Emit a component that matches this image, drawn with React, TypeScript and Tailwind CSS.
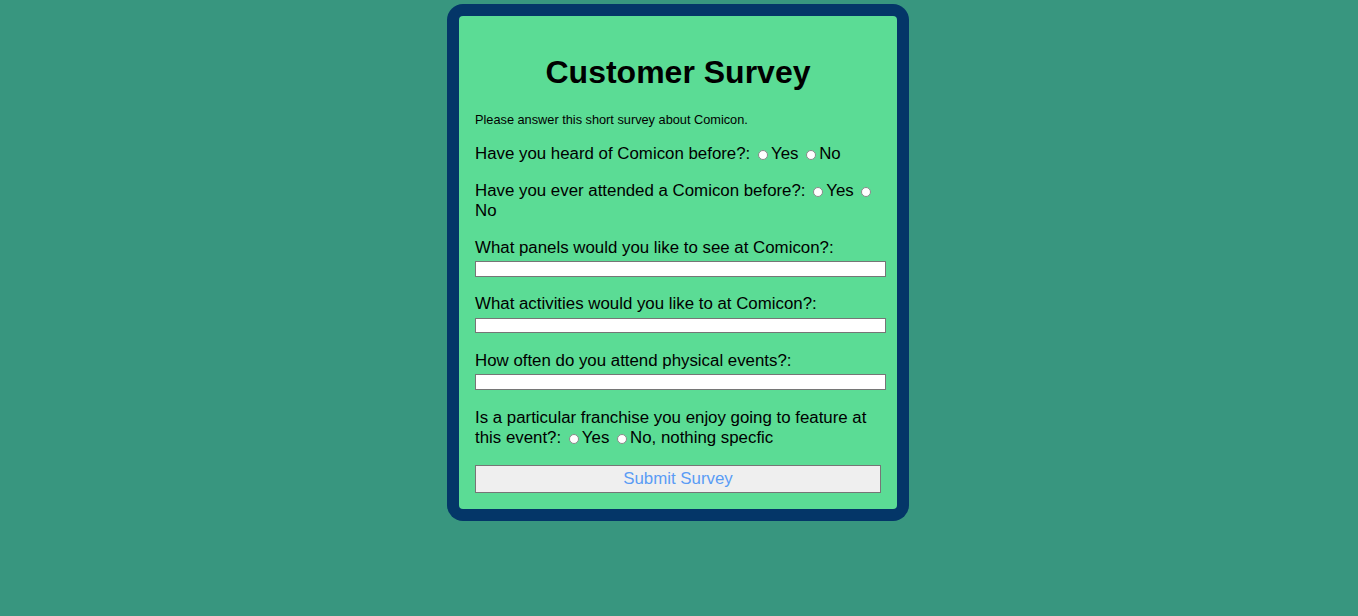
import React from "react";

function Radio({ name }: { name: string }) {
    return (
        <input
            type="radio"
            name={name}
            className="appearance-none inline-block w-[10px] h-[10px] rounded-full border border-[#8a8a8a] bg-white align-[-1px] m-0 ml-[3px] mr-[3px]"
        />
    );
}

function TextQuestion({ label, first }: { label: string; first?: boolean }) {
    return (
        <div className={first ? "mt-[17.5px]" : "mt-[18.5px]"}>
            <label className="block leading-[18px]">{label}</label>
            <input
                type="text"
                className="block mt-[4.5px] w-[411px] h-[15.5px] bg-white border border-[#767676] outline-none"
            />
        </div>
    );
}

export default function App() {
    return (
        <div className="min-h-[616px] bg-[#38967f] flex justify-center items-start pt-[4px] pr-[2px] font-['Liberation_Sans',Arial,sans-serif] text-black">
            <div className="w-[462px] bg-[#043668] rounded-[16px] p-[12px]">
                <div className="bg-[#5bdc95] rounded-[4px] px-[16px] pt-[38px] pb-[16px] text-[16.85px]">
                    <h1 className="text-center text-[32px] font-bold leading-[37px]">
                        Customer Survey
                    </h1>
                    <p className="mt-[21px] text-[12.75px] leading-[15px]">
                        Please answer this short survey about Comicon.
                    </p>

                    <div className="mt-[17px] leading-[20px]">
                        Have you heard of Comicon before?:{" "}
                        <Radio name="heard" />
                        Yes <Radio name="heard" />
                        No
                    </div>

                    <div className="mt-[17px] leading-[20px]">
                        Have you ever attended a Comicon before?:{" "}
                        <Radio name="attended" />
                        Yes <Radio name="attended" />
                        No
                    </div>

                    <TextQuestion first label="What panels would you like to see at Comicon?:" />
                    <TextQuestion label="What activities would you like to at Comicon?:" />
                    <TextQuestion label="How often do you attend physical events?:" />

                    <div className="mt-[18px] leading-[20px]">
                        Is a particular franchise you enjoy going to feature at
                        this event?: <Radio name="franchise" />
                        Yes <Radio name="franchise" />
                        No, nothing specfic
                    </div>

                    <button
                        type="button"
                        className="block mt-[17px] w-full h-[28px] bg-[#efefef] border border-[#767676] text-[#5a9cf5] text-[16.85px] leading-[20px]"
                    >
                        Submit Survey
                    </button>
                </div>
            </div>
        </div>
    );
}
